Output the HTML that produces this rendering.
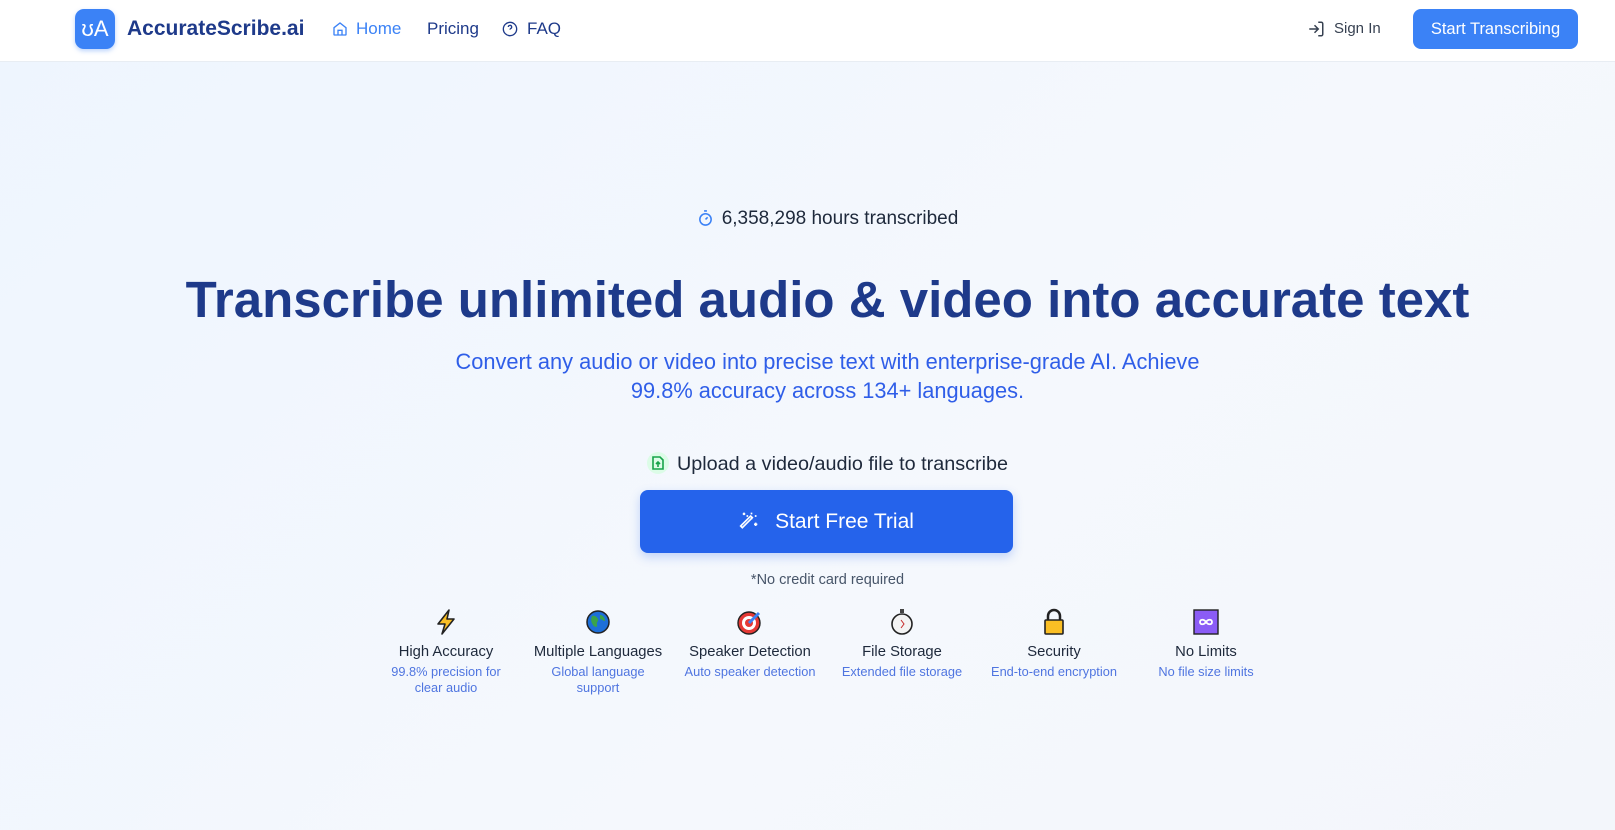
<!DOCTYPE html>
<html><head><meta charset="utf-8"><style>
*{margin:0;padding:0;box-sizing:border-box}
body{width:1615px;height:830px;overflow:hidden;font-family:"Liberation Sans",sans-serif;background:linear-gradient(135deg,#eef5fe,#f5f8fd 60%,#f3f6fb);position:relative}
.nav{position:absolute;top:0;left:0;width:1615px;height:62px;background:#fff;border-bottom:1px solid #e8edf3}
.abs{position:absolute;white-space:nowrap}
.c{position:absolute;left:20px;width:1615px;text-align:center;white-space:nowrap}
.feat{position:absolute;width:150px;text-align:center;top:608px}
.feat .t{font-size:14.8px;color:#1e293b;margin-top:8px}
.feat .d{font-size:12.8px;color:#4f75e0;margin-top:4px;line-height:16px}
.ic{height:28px;display:flex;justify-content:center;align-items:center}
</style></head><body>
<div class="nav">
 <div class="abs" style="left:75px;top:9px;width:40px;height:40px;border-radius:9px;background:#3b82f6;box-shadow:0 2px 5px rgba(59,130,246,.35);color:#fff;font-size:22px;line-height:40px;text-align:center;font-weight:300">ʊA</div>
 <div class="abs" style="left:127px;top:17px;font-size:21px;font-weight:bold;color:#1e3a8a">AccurateScribe.ai</div>
 <svg class="abs" style="left:332px;top:21px" width="16" height="16" viewBox="0 0 24 24" fill="none" stroke="#3b82f6" stroke-width="2"><path d="M3 10l9-7 9 7v10a1 1 0 0 1-1 1H4a1 1 0 0 1-1-1z"/><path d="M9 21v-7h6v7"/></svg>
 <div class="abs" style="left:356px;top:19px;font-size:17px;color:#3b82f6">Home</div>
 <div class="abs" style="left:427px;top:19px;font-size:17px;color:#1e3a8a">Pricing</div>
 <svg class="abs" style="left:502px;top:21px" width="16" height="16" viewBox="0 0 24 24" fill="none" stroke="#1e3a8a" stroke-width="2"><circle cx="12" cy="12" r="10"/><path d="M9.5 9a2.5 2.5 0 1 1 3.5 2.3c-.7.4-1 1-1 1.7M12 17h.01"/></svg>
 <div class="abs" style="left:527px;top:19px;font-size:17px;color:#1e3a8a">FAQ</div>
 <svg class="abs" style="left:1307px;top:20px" width="18" height="18" viewBox="0 0 24 24" fill="none" stroke="#374151" stroke-width="2"><path d="M15 3h4a2 2 0 0 1 2 2v14a2 2 0 0 1-2 2h-4M10 17l5-5-5-5M15 12H3"/></svg>
 <div class="abs" style="left:1334px;top:20px;font-size:15px;color:#374151">Sign In</div>
 <div class="abs" style="left:1413px;top:9px;width:165px;height:40px;border-radius:8px;background:#3b82f6;color:#fff;font-size:16.5px;line-height:40px;text-align:center">Start Transcribing</div>
</div>
<div class="c" style="top:208px;font-size:19px;color:#1e293b"><svg style="vertical-align:-3px;margin-right:8px" width="17" height="18" viewBox="0 0 24 24" fill="none" stroke="#3b82f6" stroke-width="2.2"><circle cx="12" cy="14" r="8"/><path d="M10 2h4M12 14l3-3"/></svg>6,358,298 hours transcribed</div>
<div class="c" style="top:270px;font-size:51px;font-weight:bold;color:#1e3a8a">Transcribe unlimited audio &amp; video into accurate text</div>
<div class="c" style="top:347px;font-size:21.8px;line-height:29px;color:#2f5ee8">Convert any audio or video into precise text with enterprise-grade AI. Achieve<br>99.8% accuracy across 134+ languages.</div>
<div class="c" style="top:452px;font-size:19.8px;color:#1e293b"><span style="display:inline-block;width:22px;height:22px;border-radius:50%;background:#dcfce7;vertical-align:-4px;margin-right:8px;position:relative"><svg style="position:absolute;left:5px;top:4px" width="12" height="14" viewBox="0 0 12 14" fill="none" stroke="#16a34a" stroke-width="1.6"><path d="M1 1h7l3 3v9H1z"/><path d="M6 11V6M4 8l2-2 2 2"/></svg></span>Upload a video/audio file to transcribe</div>
<div class="abs" style="left:640px;top:490px;width:373px;height:63px;border-radius:8px;background:#2563eb;box-shadow:0 4px 10px rgba(37,99,235,.25);color:#fff;font-size:21px;line-height:63px;text-align:center"><svg style="vertical-align:-3px;margin-right:16px" width="20" height="20" viewBox="0 0 24 24" fill="none" stroke="#fff" stroke-width="2"><path d="M4 20L16 8l-2-2L2 18z"/><path d="M15 4V2M15 10v-2M19 6h2M9 6h2M20 14v4M18 16h4M6 2v3M4.5 3.5h3"/></svg>Start Free Trial</div>
<div class="c" style="top:572px;font-size:14.5px;color:#475569">*No credit card required</div>
<div class="feat" style="left:371px"><div class="ic"><svg width="26" height="28" viewBox="0 0 26 28"><path d="M16 2L5 16h7l-3 10 12-15h-7z" fill="#fbbf24" stroke="#222" stroke-width="1.6" stroke-linejoin="round"/></svg></div><div class="t">High Accuracy</div><div class="d">99.8% precision for<br>clear audio</div></div>
<div class="feat" style="left:523px"><div class="ic"><svg width="26" height="26" viewBox="0 0 26 26"><circle cx="13" cy="13" r="11" fill="#1d6fd8" stroke="#222" stroke-width="1.5"/><path d="M7 7c3-1 5 1 6 3s-2 3-1 6-3 2-4 0-3-4-1-9zM15 6c3 0 5 3 5 6-2 0-3-2-5-2z" fill="#3aa34a"/></svg></div><div class="t">Multiple Languages</div><div class="d">Global language<br>support</div></div>
<div class="feat" style="left:675px"><div class="ic"><svg width="26" height="26" viewBox="0 0 26 26"><circle cx="12" cy="14" r="11" fill="#e53935" stroke="#222" stroke-width="1.4"/><circle cx="12" cy="14" r="7" fill="#fff"/><circle cx="12" cy="14" r="4" fill="#e53935"/><path d="M12 14l10-10" stroke="#3b82f6" stroke-width="3"/></svg></div><div class="t">Speaker Detection</div><div class="d">Auto speaker detection</div></div>
<div class="feat" style="left:827px"><div class="ic"><svg width="24" height="28" viewBox="0 0 24 28"><rect x="10" y="1" width="4" height="4" fill="#444"/><circle cx="12" cy="16" r="10" fill="#f3f3f3" stroke="#222" stroke-width="1.6"/><path d="M11 12l3 4-3 4" stroke="#c62828" stroke-width="1" fill="none"/></svg></div><div class="t">File Storage</div><div class="d">Extended file storage</div></div>
<div class="feat" style="left:979px"><div class="ic"><svg width="24" height="28" viewBox="0 0 24 28"><path d="M6 13V8a6 6 0 0 1 12 0v5" fill="none" stroke="#222" stroke-width="2.5"/><rect x="3" y="12" width="18" height="14" rx="1" fill="#fbbf24" stroke="#222" stroke-width="1.6"/></svg></div><div class="t">Security</div><div class="d">End-to-end encryption</div></div>
<div class="feat" style="left:1131px"><div class="ic"><svg width="26" height="26" viewBox="0 0 26 26"><rect x="1" y="1" width="24" height="24" fill="#8b5cf6" stroke="#222" stroke-width="1.4"/><path d="M13 13c-2-3-6-3-6 0s4 3 6 0 6-3 6 0-4 3-6 0" fill="none" stroke="#fff" stroke-width="1.8"/></svg></div><div class="t">No Limits</div><div class="d">No file size limits</div></div>
</body></html>
